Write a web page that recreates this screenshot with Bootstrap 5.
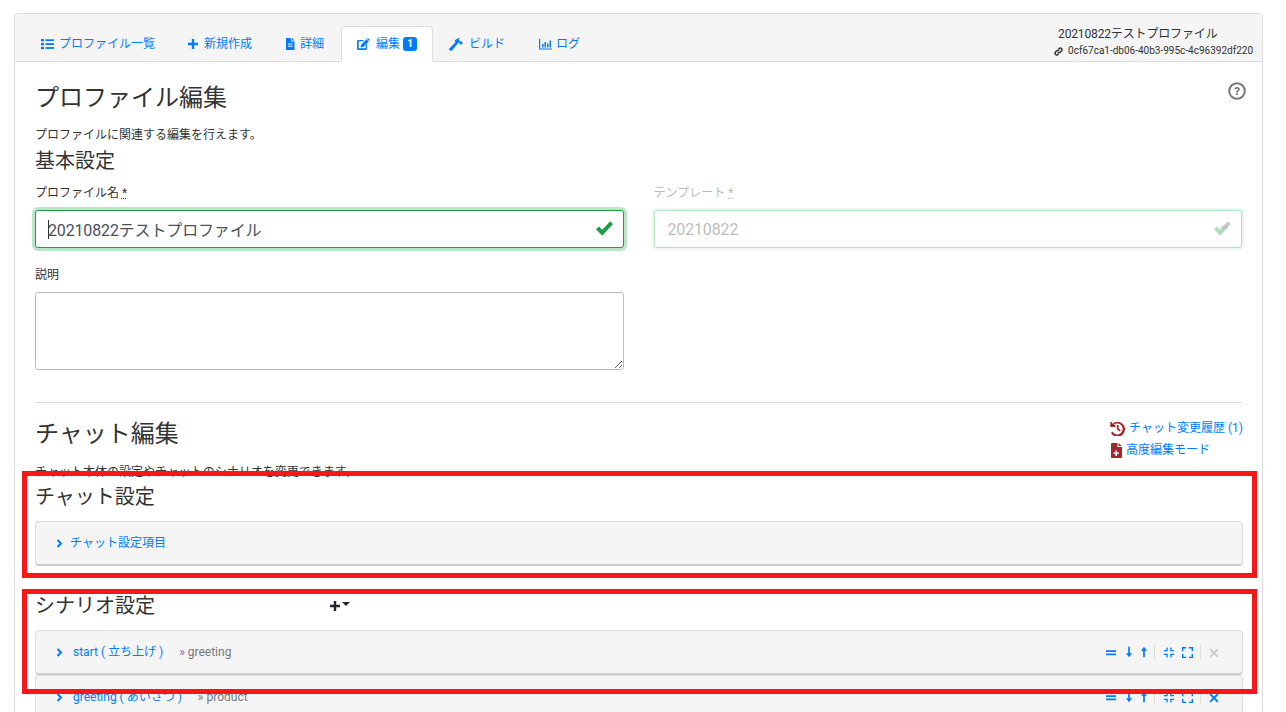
<!DOCTYPE html>
<html lang="ja"><head><meta charset="utf-8"><title>プロファイル編集</title>
<link href="https://cdn.jsdelivr.net/npm/bootstrap@5.3.0/dist/css/bootstrap.min.css" rel="stylesheet">
<style>
html,body{height:712px;overflow:hidden}
body{font-family:Roboto,"Noto Sans CJK JP",sans-serif;font-size:12px;color:#333;background:#fff;position:relative;line-height:18px}
.shell{margin:13px 23px 0 14px;border-radius:4px;border-color:#ddd;min-height:720px}
.shell>.card-header{background:#f5f5f5;border-color:#ddd;padding:12px 9px 0 10px;height:48px;display:flex;justify-content:space-between}
.tabs{margin:0;border-bottom:0;flex-wrap:nowrap}
.tabs .nav-link{padding:8px 15px;font-size:12px;line-height:18px;color:#007bff;display:flex;align-items:center;white-space:nowrap;height:36px;margin-bottom:-1px;border-radius:4px 4px 0 0}
.tabs .nav-link.active{color:#007bff;background:#fff;border-color:#ddd #ddd #fff}
.tabs .wide-end{padding-right:16px}
.tabs svg{fill:#007bff;flex:none}
.tico{width:13px;height:12px;margin-right:5px}
.tabs .t-plus{width:12px}
.tabs .t-doc{width:12px;margin-right:4px}
.tabs .t-edit{margin-right:6px}
.tabs .t-ham{width:15px;height:14px}
.tabs .t-bar{margin-left:2px;margin-right:4px}
.cnt{background:#007bff;color:#fff;font-size:10px;font-weight:700;line-height:14px;width:14px;height:14px;border-radius:3px;text-align:center;margin-left:3px}
.who{text-align:left;margin-top:-1px;color:#333}
.who-name{line-height:18px;padding-left:4px;letter-spacing:-.15px}
.who-id{font-size:10px;line-height:14px;display:flex;align-items:center;gap:5px;margin-top:1px;white-space:nowrap}
.who-id svg{width:9px;height:9px;fill:#333}
.main{padding:21px 20px 0}
.ttl{font-size:24px;line-height:30px;font-weight:400;margin:0;color:#333}
.sub{font-size:20px;line-height:24px;font-weight:400;margin:0;color:#333}
.intro{margin:13px 0 0;line-height:18px}
.lower{margin-top:14px}
.s-base{margin-top:5px}
.fld{margin:0 0 8px;font-size:12px;line-height:18px;display:block}
.fld u{text-decoration:underline dotted}
.frow{margin-left:-15px;margin-right:-15px}
.frow>.col-6{padding-left:15px;padding-right:15px}
.form-row-a{margin-top:11px}
.form-row-b{margin-top:18px}
.inp{height:38px;border-radius:3px;font-size:16px;letter-spacing:-.15px;padding:6px 12px;color:#495057;font-family:inherit;line-height:24px}
.ok,.ok:focus{border-color:#1f9d45;box-shadow:0 0 0 3px rgba(40,167,69,.3);color:#495057}
.inp:disabled{background:#fff;color:#333;opacity:.33;border-color:#28a745;box-shadow:0 0 0 2px rgba(40,167,69,.25);padding-left:13px}
.muted-lab{color:#bbb}
.wrap-inp{position:relative}
.chk{position:absolute;right:11px;top:11px;width:17px;height:15px;fill:#1f9d45}
.chk-off{opacity:.35}
.caret{position:absolute;left:13px;top:10px;width:1px;height:19px;background:#333}
.note-area{height:78px;border-radius:3px;border-color:#bbb}
.sep{margin:32px 0 0;border-color:#e0e0e0;opacity:1}
.chat-head{margin-top:16px}
.side{margin-top:-2px;margin-right:-1px;color:#007bff}
.side-row{display:flex;align-items:center;height:22px;color:#007bff;text-decoration:none;gap:4px}
.side-row svg{fill:#a3262d;flex:none}
.side-row+.side-row{margin-left:1px}
.hist{width:15px;height:15px}
.fmed{width:11px;height:15px}
.s-chat{margin-top:4px}
.acc-box{background:#f5f5f5;border:1px solid #ddd;border-bottom:2px solid #ccc;border-radius:4px;display:flex;align-items:center;color:#007bff;padding-left:20px;height:45px;width:1208px;margin-right:-1px}
.b-chat{margin-top:12px}
.s-scn{margin-top:28px}
.b-scn{margin-top:12px}
.cv{width:7px;height:9px;fill:none;stroke:#007bff;stroke-width:2;margin-right:10px;flex:none}
.cv-s{margin-right:7px}
.to{color:#777;margin-left:16px}
.tools{margin-left:auto;display:flex;align-items:center;padding-right:23px;height:100%}
.tools svg{fill:#007bff;width:10px;height:11px;flex:none;margin-left:7px}
.tools .t-eq{margin-left:0}
.tools .t-ar{width:6px;height:12px}
.tools .t-dn{margin-left:10px}
.tools .t-up{margin-left:9px}
.tools .t-cp{margin-left:9px}
.tools .t-ex{width:11px;margin-left:8px}
.tools .t-x{margin-left:8px}
.vbar{width:1px;height:14px;background:#ddd;margin-left:7px}
.tools .dim{fill:#ccc}
.plusmenu{display:flex;align-items:center;margin-left:174px;color:#212529}
.plusmenu svg{width:12px;height:12px;fill:#212529}
.plusmenu i{display:block;border:4px solid transparent;border-top-color:#212529;border-bottom:0;margin:0 0 4px 1px}
.red{position:absolute;left:22px;width:1235px;border:5px solid #f91616;pointer-events:none}
.r1{top:471px;height:107px}
.r2{top:589px;height:105px}
.helpi{position:absolute;right:-4px;top:-1px;width:18px;height:18px}
</style></head><body>
<div class="card shell">
 <div class="card-header">
  <ul class="nav nav-tabs tabs">
   <li class="nav-item"><a class="nav-link" href="#"><svg class="tico" viewBox="0 0 13 12"><rect x="0" y="1" width="3" height="2.4"/><rect x="0" y="4.9" width="3" height="2.4"/><rect x="0" y="8.8" width="3" height="2.4"/><rect x="4.5" y="1.3" width="8.5" height="1.8"/><rect x="4.5" y="5.2" width="8.5" height="1.8"/><rect x="4.5" y="9.1" width="8.5" height="1.8"/></svg>プロファイル一覧</a></li>
   <li class="nav-item"><a class="nav-link" href="#"><svg class="tico t-plus" viewBox="0 0 12 12"><path d="M4.8 1h2.400v3.800H11v2.400H7.200V11H4.800V7.200H1V4.800h3.800z"/></svg>新規作成</a></li>
   <li class="nav-item"><a class="nav-link wide-end" href="#"><svg class="tico t-doc" viewBox="0 0 12 12"><path fill-rule="evenodd" d="M2 0h5v3.500h3.500V12H2zM8 0l2.500 2.500H8zM4 5.500v1h4.500v-1zM4 7.700v1h4.500v-1z"/></svg>詳細</a></li>
   <li class="nav-item"><a class="nav-link active" href="#"><svg class="tico t-edit" viewBox="0 0 13 12"><path d="M1.400 2H7L5.900 3.200H1.700v7.100h7.100V7L10 5.800v4.800A1.400 1.400 0 0 1 8.600 12H1.400A1.400 1.400 0 0 1 0 10.600V3.400A1.400 1.400 0 0 1 1.400 2z"/><path d="M4 6.700 9.500 1.200l2.300 2.300-5.500 5.500-2.700.4zM10.200.5a.9.9 0 0 1 1.200 0l1.100 1.100a.9.9 0 0 1 0 1.200l-.2.2-2.300-2.300z"/></svg>編集<span class="cnt">1</span></a></li>
   <li class="nav-item"><a class="nav-link" href="#"><svg class="tico t-ham" viewBox="0 0 15 14"><path d="M.3 11.600 6.600 5.300 5.500 4.200C6.600 2 9 .4 11 1.500L9.400 2.700l1.800 1.800 1.100-.2 1.600 1.600-2 2-1.600-1.600.1-1L9.200 6 3 13.500c-.5.6-1.200.6-1.700.1L.4 12.700a.7.7 0 0 1-.1-1.100z"/></svg>ビルド</a></li>
   <li class="nav-item"><a class="nav-link" href="#"><svg class="tico t-bar" viewBox="0 0 13 12"><path d="M0 1h1.200v9.400H13v1.100H0zM3 6h1.500v3.500H3zM5.500 4H7v5.500H5.500zM8 5.500h1.500v4H8zM10.500 2.500H12v7h-1.500z"/></svg>ログ</a></li>
  </ul>
  <div class="who">
   <div class="who-name">20210822テストプロファイル</div>
   <div class="who-id"><svg viewBox="0 0 12 12"><path fill="none" stroke="#333" stroke-width="2" d="M5 7a2.200 2.200 0 0 0 3.200 0l2-2A2.300 2.300 0 0 0 7 1.800L6 2.800M7 5a2.200 2.200 0 0 0-3.200 0l-2 2A2.300 2.300 0 0 0 5 10.200l1-1"/></svg>0cf67ca1-db06-40b3-995c-4c96392df220</div>
  </div>
 </div>
 <div class="main">
  <div class="position-relative">
   <h1 class="ttl">プロファイル編集</h1>
   <svg class="helpi" viewBox="0 0 18 18"><circle cx="9" cy="9" r="7.800" fill="none" stroke="#777" stroke-width="2"/><path d="M6.300 7.200C6.400 5.700 7.500 5 9 5c1.600 0 2.800.9 2.800 2.300 0 1.800-2 1.800-2 3.200H8.100c0-2.100 1.900-2.100 1.900-3.200 0-.6-.4-.9-1-.9-.7 0-1 .4-1.100.8zM8 11.300h1.900v1.800H8z" fill="#777"/></svg>
  </div>
  <p class="intro">プロファイルに関連する編集を行えます。</p>
  <h2 class="sub s-base">基本設定</h2>
  <div class="row frow form-row-a">
   <div class="col-6">
    <label class="fld">プロファイル名 <u>*</u></label>
    <div class="wrap-inp"><input class="form-control inp ok" value="20210822テストプロファイル"><span class="caret"></span><svg class="chk" viewBox="1 1 15 13"><path d="M1 8.200l2.500-2.500 3 3L13.500 1 16 3.500 6.500 14z"/></svg></div>
   </div>
   <div class="col-6">
    <label class="fld muted-lab">テンプレート <u>*</u></label>
    <div class="wrap-inp"><input class="form-control inp" value="20210822" disabled><svg class="chk chk-off" viewBox="1 1 15 13"><path d="M1 8.200l2.500-2.500 3 3L13.500 1 16 3.500 6.500 14z"/><path d="M6 7.500h7V2z" fill="#555"/></svg></div>
   </div>
  </div>
  <div class="row frow form-row-b">
   <div class="col-6">
    <label class="fld">説明</label>
    <textarea class="form-control note-area"></textarea>
   </div>
  </div>
  <hr class="sep">
  <div class="d-flex justify-content-between chat-head">
   <div>
    <h1 class="ttl">チャット編集</h1>
    <p class="intro lower">チャット本体の設定やチャットのシナリオを変更できます。</p>
   </div>
   <div class="side">
    <a class="side-row" href="#"><svg class="hist" viewBox="0 0 15 15"><path d="M2.200 1 .3 1v5h5V4H3.600A5.400 5.400 0 1 1 2.500 10.500L1 12A7.500 7.500 0 1 0 2.200 3z"/><path d="M6.800 4h1.800v3.400l2.200 1.600-1 1.400-3-2.200z"/></svg>チャット変更履歴 (1)</a>
    <a class="side-row" href="#"><svg class="fmed" viewBox="0 0 11 15"><path fill-rule="evenodd" d="M1 0h5.500v4H11v10a1 1 0 0 1-1 1H1a1 1 0 0 1-1-1V1a1 1 0 0 1 1-1zM7.500 0 11 3H7.500zM4.500 7.500v2h-2v1.500h2v2H6v-2h2V9.500H6v-2z"/></svg>高度編集モード</a>
   </div>
  </div>
  <h2 class="sub s-chat">チャット設定</h2>
  <div class="acc-box b-chat"><svg class="cv cv-s" viewBox="0 0 7 9"><path d="M1.500 1 5 4.500 1.500 8"/></svg>チャット設定項目</div>
  <div class="d-flex align-items-center s-scn"><h2 class="sub">シナリオ設定</h2><div class="plusmenu"><svg viewBox="0 0 12 12"><path d="M4.800 1h2.400v3.800H11v2.400H7.200V11H4.800V7.200H1V4.800h3.800z"/></svg><i></i></div></div>
  <div class="acc-box b-scn"><svg class="cv" viewBox="0 0 7 9"><path d="M1.500 1 5 4.500 1.500 8"/></svg>start ( 立ち上げ )<span class="to">» greeting</span>
   <div class="tools">
    <svg class="t-eq" viewBox="0 0 11 12"><path d="M0 3.500h11v2H0zM0 7h11v2H0z"/></svg>
    <svg class="t-ar t-dn" viewBox="2 0 7 12"><path d="M4.500 0h2v7.500h2.500L5.500 12 2 7.500h2.500z"/></svg>
    <svg class="t-ar t-up" viewBox="2 0 7 12"><path d="M4.500 12h2V4.500h2.500L5.500 0 2 4.500h2.500z"/></svg>
    <span class="vbar"></span>
    <svg class="t-cp" viewBox="0 0 12 12"><path d="M3 0h1.500v4.500H0V3h3zM7.500 0H9v3h3v1.500H7.500zM0 7.500h4.500V12H3V9H0zM7.500 7.500H12V9H9v3H7.500z"/></svg>
    <svg class="t-ex" viewBox="0 0 12 12"><path d="M0 0h4.500v1.500h-3V4.500H0zM7.500 0H12v4.500h-1.500v-3h-3zM0 7.500h1.500v3h3V12H0zM10.500 7.500H12V12H7.500v-1.500h3z"/></svg>
    <span class="vbar"></span>
    <svg class="t-x dim" viewBox="0 0 11 12"><path d="M2 1.500 5.500 5 9 1.500l1.500 1.500L7 6.500 10.500 10 9 11.500 5.500 8 2 11.500.5 10 4 6.500.5 3z"/></svg>
   </div>
  </div>
  <div class="acc-box"><svg class="cv" viewBox="0 0 7 9"><path d="M1.500 1 5 4.500 1.500 8"/></svg>greeting ( あいさつ )<span class="to">» product</span>
   <div class="tools">
    <svg class="t-eq" viewBox="0 0 11 12"><path d="M0 3.500h11v2H0zM0 7h11v2H0z"/></svg>
    <svg class="t-ar t-dn" viewBox="2 0 7 12"><path d="M4.500 0h2v7.500h2.500L5.500 12 2 7.500h2.500z"/></svg>
    <svg class="t-ar t-up" viewBox="2 0 7 12"><path d="M4.500 12h2V4.500h2.500L5.500 0 2 4.500h2.500z"/></svg>
    <span class="vbar"></span>
    <svg class="t-cp" viewBox="0 0 12 12"><path d="M3 0h1.500v4.500H0V3h3zM7.500 0H9v3h3v1.500H7.500zM0 7.500h4.500V12H3V9H0zM7.500 7.500H12V9H9v3H7.500z"/></svg>
    <svg class="t-ex" viewBox="0 0 12 12"><path d="M0 0h4.500v1.500h-3V4.500H0zM7.500 0H12v4.500h-1.500v-3h-3zM0 7.500h1.500v3h3V12H0zM10.500 7.500H12V12H7.500v-1.500h3z"/></svg>
    <span class="vbar"></span>
    <svg class="t-x" viewBox="0 0 11 12"><path d="M2 1.500 5.500 5 9 1.500l1.500 1.500L7 6.500 10.500 10 9 11.500 5.500 8 2 11.500.5 10 4 6.500.5 3z"/></svg>
   </div>
  </div>
 </div>
</div>
<div class="red r1"></div>
<div class="red r2"></div>
</body></html>
